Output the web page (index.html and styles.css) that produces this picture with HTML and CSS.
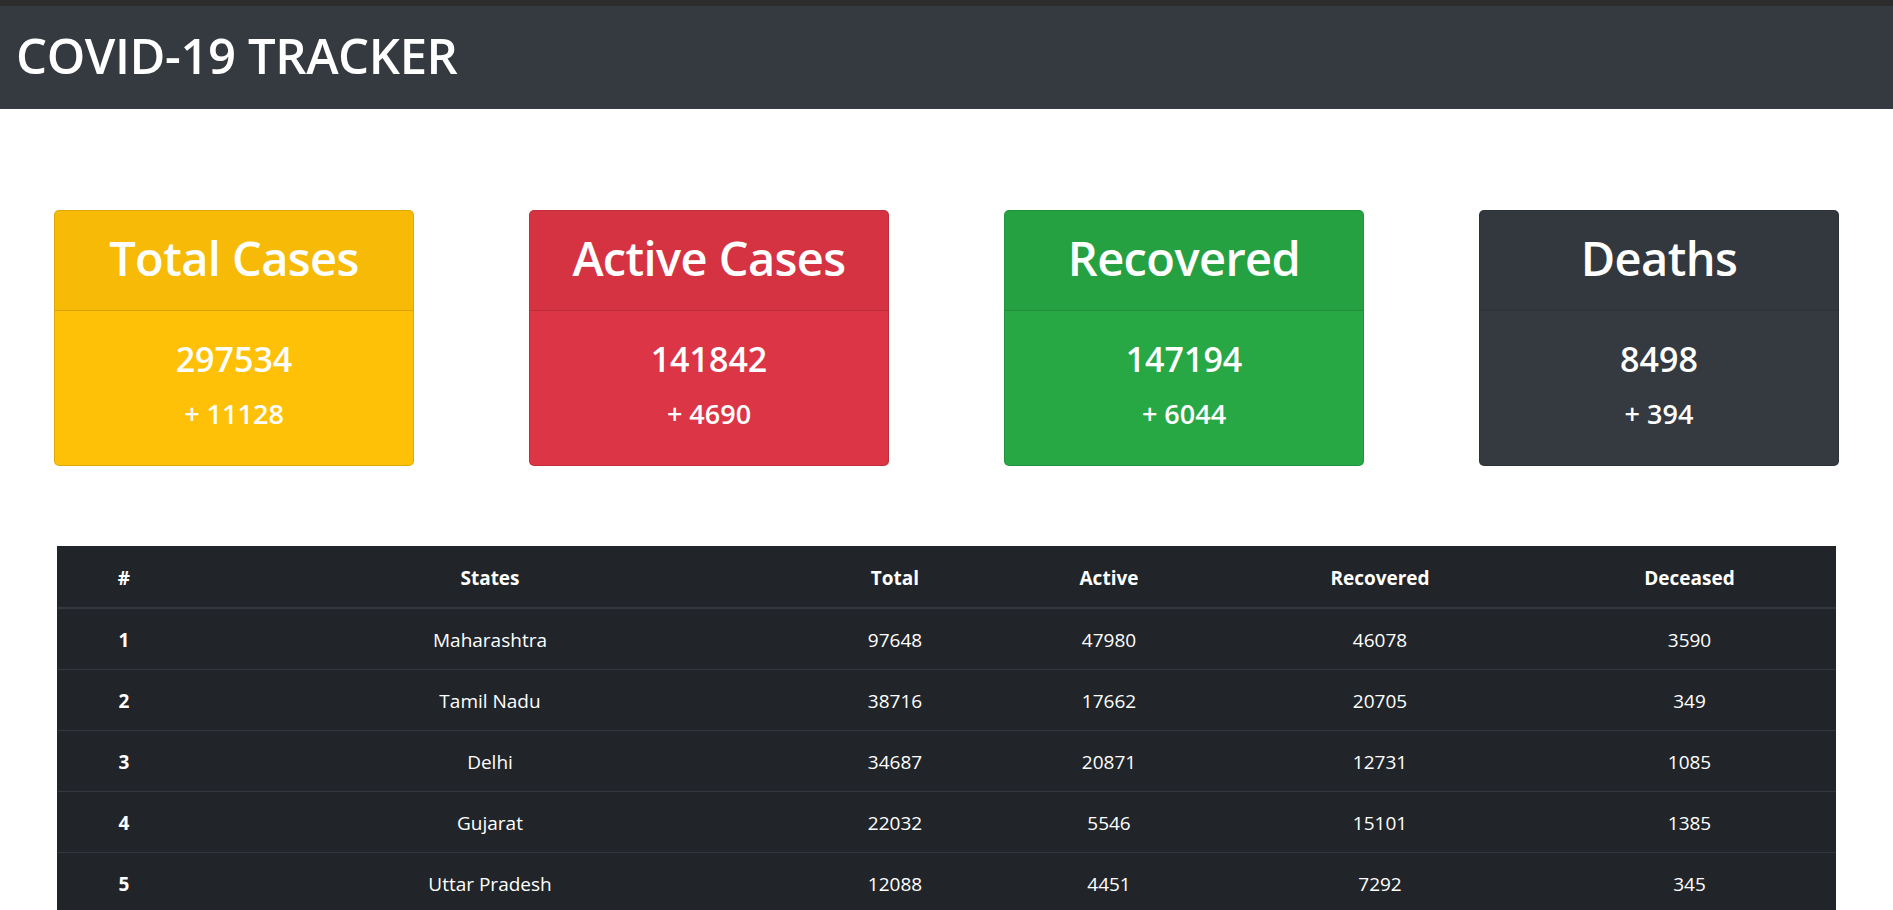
FILE: index.html
```html
<!DOCTYPE html>
<html lang="en">
<head>
<meta charset="utf-8">
<title>COVID-19 Tracker</title>
<link rel="stylesheet" href="styles.css">
</head>
<body>
<header class="navbar">
  <h1 class="brand">COVID-19 TRACKER</h1>
</header>

<section class="cards">
  <div class="card card-warning">
    <div class="card-header"><h2 class="card-title">Total Cases</h2></div>
    <div class="card-body">
      <div class="count">297534</div>
      <div class="delta">+ 11128</div>
    </div>
  </div>
  <div class="card card-danger">
    <div class="card-header"><h2 class="card-title">Active Cases</h2></div>
    <div class="card-body">
      <div class="count">141842</div>
      <div class="delta">+ 4690</div>
    </div>
  </div>
  <div class="card card-success">
    <div class="card-header"><h2 class="card-title">Recovered</h2></div>
    <div class="card-body">
      <div class="count">147194</div>
      <div class="delta">+ 6044</div>
    </div>
  </div>
  <div class="card card-dark">
    <div class="card-header"><h2 class="card-title">Deaths</h2></div>
    <div class="card-body">
      <div class="count">8498</div>
      <div class="delta">+ 394</div>
    </div>
  </div>
</section>

<section class="table-wrap">
  <table class="states">
    <colgroup>
      <col class="c-num"><col class="c-state"><col class="c-total"><col class="c-active"><col class="c-rec"><col class="c-dec">
    </colgroup>
    <thead>
      <tr><th>#</th><th>States</th><th>Total</th><th>Active</th><th>Recovered</th><th>Deceased</th></tr>
    </thead>
    <tbody>
      <tr><th>1</th><td>Maharashtra</td><td>97648</td><td>47980</td><td>46078</td><td>3590</td></tr>
      <tr><th>2</th><td>Tamil Nadu</td><td>38716</td><td>17662</td><td>20705</td><td>349</td></tr>
      <tr><th>3</th><td>Delhi</td><td>34687</td><td>20871</td><td>12731</td><td>1085</td></tr>
      <tr><th>4</th><td>Gujarat</td><td>22032</td><td>5546</td><td>15101</td><td>1385</td></tr>
      <tr><th>5</th><td>Uttar Pradesh</td><td>12088</td><td>4451</td><td>7292</td><td>345</td></tr>
    </tbody>
  </table>
</section>
</body>
</html>
```

FILE: styles.css
```css
html, body {
  margin: 0;
  padding: 0;
  overflow: hidden;
  background: #fff;
}

body {
  font-family: "Open Sans", "Noto Sans", "Liberation Sans", sans-serif;
  color: #212529;
  border-top: 6px solid #2c2c2c;
}

.navbar {
  height: 103px;
  box-sizing: border-box;
  background: #343a40;
  padding: 18px 0 0 16px;
}

.brand {
  margin: 0;
  color: #fff;
  font-size: 49px;
  font-weight: 600;
  line-height: 62px;
  letter-spacing: -0.4px;
}

.cards {
  display: flex;
  justify-content: space-between;
  padding: 0 54px;
  margin-top: 101px;
}

.card {
  width: 360px;
  height: 256px;
  box-sizing: border-box;
  border: 1px solid rgba(0, 0, 0, 0.125);
  border-radius: 5px;
  color: #fff;
  text-align: center;
  overflow: hidden;
}

.card-warning { background: #ffc107; }
.card-danger { background: #dc3545; }
.card-success { background: #28a745; }
.card-dark { background: #343a40; }

.card-header {
  height: 100px;
  box-sizing: border-box;
  background: rgba(0, 0, 0, 0.03);
  border-bottom: 1px solid rgba(0, 0, 0, 0.125);
  padding-top: 16px;
}

.card-title {
  margin: 0;
  font-size: 47px;
  font-weight: 600;
  line-height: 62px;
  letter-spacing: -0.6px;
}

.card-body {
  padding-top: 27px;
}

.count {
  font-size: 34px;
  font-weight: 600;
  line-height: 42px;
}

.delta {
  margin-top: 17px;
  font-size: 27px;
  font-weight: 600;
  line-height: 34px;
}

.table-wrap {
  margin-top: 80px;
  padding: 0 57px;
}

.states {
  width: 1779px;
  border-collapse: collapse;
  table-layout: fixed;
  background: #212529;
  color: #fff;
  text-align: center;
  font-size: 19px;
}

.c-num { width: 134px; }
.c-state { width: 598px; }
.c-total { width: 212px; }
.c-active { width: 216px; }
.c-rec { width: 326px; }
.c-dec { width: 293px; }

.states th,
.states td {
  padding: 15px;
  line-height: 30px;
  border-top: 1px solid #32383e;
}

.states th {
  font-weight: 700;
}

.states td {
  font-weight: 400;
}

.states thead th {
  border-top: none;
  padding-top: 17px;
  padding-bottom: 14px;
  border-bottom: 2px solid #32383e;
}

.states tbody td,
.states tbody th {
  padding-top: 16px;
  padding-bottom: 14px;
}
```
